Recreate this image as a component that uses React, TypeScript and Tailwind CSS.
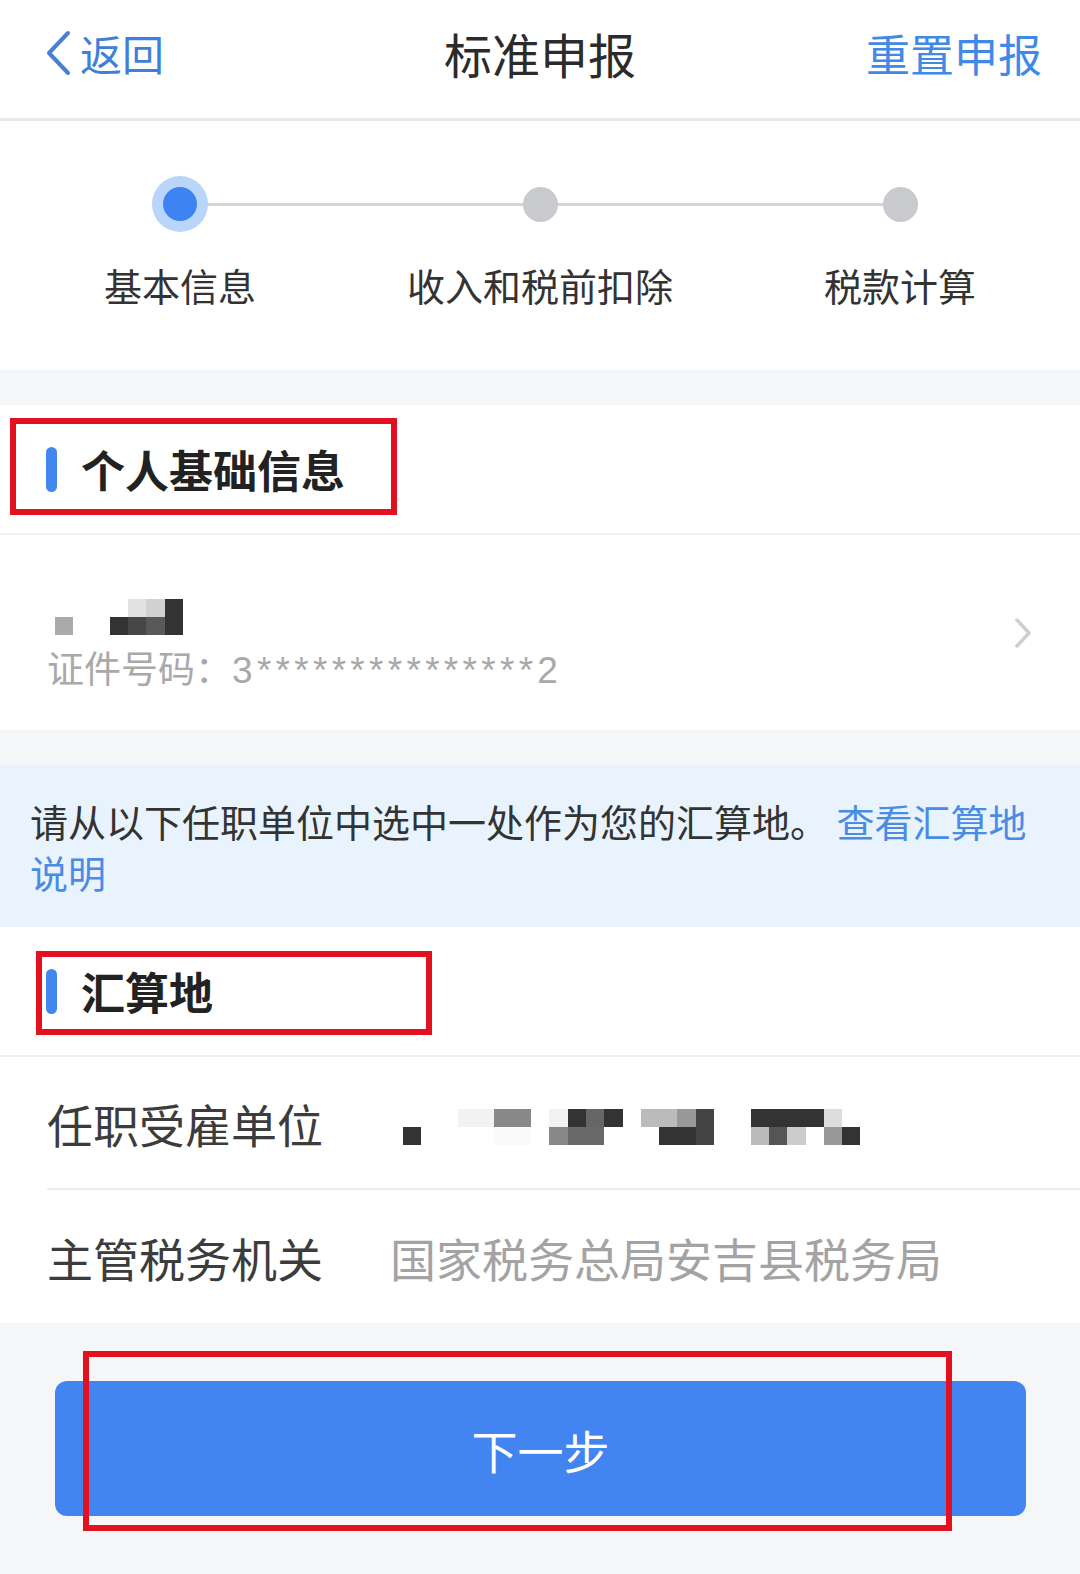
const FONT = "font-['Noto_Sans_CJK_SC','Noto_Sans',sans-serif]";

// 打码的姓名 / 单位名称，按截图里的马赛克块画
const NAME_MOSAIC = [
  ['', '', '', '', 'bg-[#e2e2e2]', 'bg-[#d2d2d2]', 'bg-[#333]'],
  ['bg-[#aaa]', '', '', 'bg-[#333]', 'bg-[#474747]', 'bg-[#595959]', 'bg-[#333]'],
];

const EMPLOYER_MOSAIC = [
  [
    '', '', '', 'bg-[#f2f2f2]', 'bg-[#f2f2f2]', 'bg-[#888]', 'bg-[#888]', '', 'bg-[#f2f2f2]', 'bg-[#333]',
    'bg-[#666]', 'bg-[#333]', '', 'bg-[#bbb]', 'bg-[#bbb]', 'bg-[#999]', 'bg-[#444]', '', '', 'bg-[#333]',
    'bg-[#333]', 'bg-[#333]', 'bg-[#333]', 'bg-[#ddd]', '',
  ],
  [
    'bg-[#333]', '', '', '', '', 'bg-[#fafafa]', 'bg-[#fafafa]', '', 'bg-[#888]', 'bg-[#6a6a6a]',
    'bg-[#6a6a6a]', '', '', '', 'bg-[#333]', 'bg-[#333]', 'bg-[#444]', '', '', 'bg-[#bbb]',
    'bg-[#555]', 'bg-[#ccc]', '', 'bg-[#999]', 'bg-[#333]',
  ],
];

const STEPS = ['基本信息', '收入和税前扣除', '税款计算'];

export default function App() {
  return (
    <div className={`relative w-[1080px] min-h-[1574px] bg-[#f5f6f8] ${FONT}`}>
      {/* Nav bar */}
      <div className="grid grid-cols-3 items-center h-[121px] pb-[12px] bg-white border-b-[3px] border-[#e9e9eb]">
        <div className="flex items-center pl-[44px] text-[#3f7fdc]">
          <svg width="28" height="46" viewBox="0 0 28 46" fill="none">
            <polyline points="24,3 5,23 24,43" stroke="#4a80d4" strokeWidth="4" strokeLinecap="round" strokeLinejoin="round" />
          </svg>
          <span className="ml-[8px] text-[42px] leading-none">返回</span>
        </div>
        <h1 className="text-center text-[48px] leading-none text-[#2b2b2b]">标准申报</h1>
        <div className="text-right pr-[38px] text-[44px] leading-none text-[#4189e6]">重置申报</div>
      </div>

      {/* Steps */}
      <div className="bg-white pt-[55px] pb-[66px]">
        <div className="relative grid grid-cols-3">
          <div className="absolute left-[180px] right-[180px] top-[27px] h-[3px] bg-[#d4d4d6]" />
          {STEPS.map((label, i) => (
            <div key={label} className="relative flex flex-col items-center">
              <div className="h-[56px] flex items-center justify-center">
                {i === 0 ? (
                  <div className="w-[56px] h-[56px] rounded-full bg-[#b9d5fa] flex items-center justify-center">
                    <div className="w-[34px] h-[34px] rounded-full bg-[#3d84f2]" />
                  </div>
                ) : (
                  <div className="w-[35px] h-[35px] rounded-full bg-[#c9cace]" />
                )}
              </div>
              <span className="mt-[34px] text-[38px] leading-[38px] text-[#333]">{label}</span>
            </div>
          ))}
        </div>
      </div>

      {/* 个人基础信息 */}
      <div className="mt-[35px] bg-white">
        <SectionTitle title="个人基础信息" />
        <div className="h-[2px] bg-[#efeff1]" />
        <div className="flex items-center h-[195px] pr-[48px]">
          <div className="flex-1 flex flex-col pl-[55px] pt-[24px]">
            <Mosaic rows={NAME_MOSAIC} />
            <div className="-ml-[8px] mt-[12px] text-[37px] leading-[40px] text-[#a9a9a9]">
              证件号码：
              <span className="font-['Liberation_Sans','Noto_Sans',sans-serif] text-[37px] tracking-[4.3px]">3***************2</span>
            </div>
          </div>
          <svg width="18" height="32" viewBox="0 0 18 32" fill="none">
            <polyline points="3,3 15,16 3,29" stroke="#cfcfd1" strokeWidth="3.5" strokeLinecap="round" strokeLinejoin="round" />
          </svg>
        </div>
      </div>

      {/* 提示 */}
      <div className="mt-[35px] bg-[#e9f3fd] px-[30px] pt-[30px] pb-[30px] text-[38px] leading-[51px] text-[#333]">
        请从以下任职单位中选中一处作为您的汇算地。 <span className="text-[#4a8be4]">查看汇算地说明</span>
      </div>

      {/* 汇算地 */}
      <div className="bg-white">
        <SectionTitle title="汇算地" />
        <div className="h-[2px] bg-[#efeff1]" />
        <div className="flex items-center h-[131px] pl-[47px]">
          <span className="w-[343px] text-[46px] leading-none text-[#3c3c3c]">任职受雇单位</span>
          <div className="pl-[13px] pt-[8px]">
            <Mosaic rows={EMPLOYER_MOSAIC} />
          </div>
        </div>
        <div className="ml-[47px] h-[2px] bg-[#ececee]" />
        <div className="flex items-center h-[133px] pl-[47px]">
          <span className="w-[343px] text-[46px] leading-none text-[#3c3c3c]">主管税务机关</span>
          <span className="text-[46px] leading-none text-[#a3a3a3]">国家税务总局安吉县税务局</span>
        </div>
      </div>

      {/* Next */}
      <div className="pt-[58px] pl-[55px]">
        <button className="w-[971px] h-[135px] rounded-[12px] bg-[#4285f0] text-white text-[46px] leading-none">
          下一步
        </button>
      </div>

      {/* 标注红框 */}
      <div className="absolute left-[10px] top-[418px] w-[387px] h-[97px] border-[6px] border-[#e3101f]" />
      <div className="absolute left-[36px] top-[951px] w-[396px] h-[84px] border-[6px] border-[#e3101f]" />
      <div className="absolute left-[83px] top-[1351px] w-[869px] h-[180px] border-[6px] border-[#e3101f]" />
    </div>
  );
}

function SectionTitle({ title }: { title: string }) {
  return (
    <div className="flex items-center h-[128px] pl-[46px]">
      <div className="w-[11px] h-[45px] rounded-full bg-[#4287ee]" />
      <span className="ml-[24px] text-[44px] leading-none font-bold text-[#222]">{title}</span>
    </div>
  );
}

function Mosaic({ rows }: { rows: string[][] }) {
  return (
    <div className="flex flex-col">
      {rows.map((row, r) => (
        <div key={r} className="flex">
          {row.map((cls, c) => (
            <div key={c} className={`w-[18.3px] h-[18px] ${cls}`} />
          ))}
        </div>
      ))}
    </div>
  );
}
